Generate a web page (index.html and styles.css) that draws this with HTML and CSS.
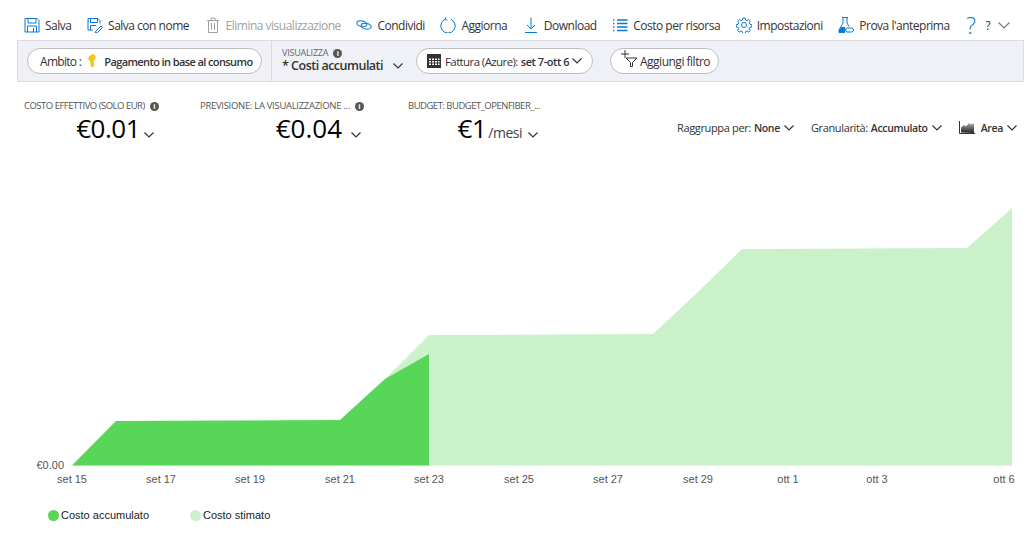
FILE: index.html
```html
<!doctype html>
<html>
  <head>
    <meta charset="utf-8">
    <title>Analisi dei costi</title>
    <link rel="stylesheet" href="styles.css">
  </head>
  <body>
    <header class="toolbar">
      <span class="cmd"><svg class="ico" viewBox="0 0 16 16"><path d="M1 1.500h12l2 2v11.500h-14zM4 1.500v4.500h8v-4.500M3.500 15v-6h9v6M9.500 11v4"/></svg>Salva</span>
      <span class="cmd"><svg class="ico" viewBox="0 0 16 16"><path d="M1 1.500h10l2 2v3M1 1.500v11.500h5M3.500 1.500v4h7v-4M3.500 13v-4.500h5.500M9 14l5-5 1.500 1.500-5 5-2.500.5zM1 4h1"/></svg>Salva con nome</span>
      <span class="cmd off"><svg class="ico trash" viewBox="0 0 16 16"><path d="M3.500 3.500v12h9v-12M2 3.500h12M6 3.500v-2.500h4v2.500M6.500 6v7M9.500 6v7"/></svg>Elimina visualizzazione</span>
      <span class="cmd"><svg class="ico" viewBox="0 0 16 16"><ellipse cx="5.800" cy="6.800" rx="5" ry="2.800" transform="rotate(12 5.800 6.800)"/><ellipse cx="10.200" cy="9.200" rx="5" ry="2.800" transform="rotate(12 10.200 9.200)"/></svg>Condividi</span>
      <span class="cmd"><svg class="ico" viewBox="0 0 16 16"><path d="M5.300 2.200a7.200 7.200 0 1 0 5.400 0M5.800 .2l-.6 2.100 2.100.9"/></svg>Aggiorna</span>
      <span class="cmd"><svg class="ico" viewBox="0 0 16 16"><path d="M8 .5v11.500M4 8l4 4 4-4M2 15.500h12"/></svg>Download</span>
      <span class="cmd"><svg class="ico" viewBox="0 0 16 16"><path d="M5 3h10.500M5 6.500h10.500M5 10h10.500M5 13.500h10.500" stroke-width="1.300"/><path d="M1 3h2M1 6.500h2M1 10h2M1 13.500h2" stroke-width="1.300" stroke-dasharray="1 .6"/></svg>Costo per risorsa</span>
      <span class="cmd"><svg class="ico" viewBox="0 0 16 16"><circle cx="8" cy="8" r="2.500"/><path d="M6.800 1h2.400l.4 2 1.300.6 1.800-1.100 1.600 1.600-1.100 1.800.6 1.300 2 .4v2.400l-2 .4-.6 1.300 1.100 1.800-1.600 1.600-1.800-1.100-1.300.6-.4 2h-2.400l-.4-2-1.300-.6-1.800 1.100-1.600-1.600 1.100-1.800-.6-1.300-2-.4v-2.400l2-.4.6-1.300-1.100-1.800 1.600-1.600 1.800 1.100 1.300-.6z"/></svg>Impostazioni</span>
      <span class="cmd"><svg class="ico flask" viewBox="0 0 16 16"><path d="M4 .5h6M5 .5v5.500l-4 7v2.500h6M9 .5v5.500l2 3.500"/><path class="fill" d="M3.500 10h3.500v5.500h-6v-2.500z"/><rect x="7.500" y="11" width="8" height="4" rx="2"/></svg>Prova l'anteprima</span>
      <span class="cmd help"><span class="qmark">?</span>?<svg class="chev wide" viewBox="0 0 12 7"><path d="M.5.500l5.500 5.500 5.500-5.500"/></svg></span>
    </header>

    <section class="filters">
      <div class="pill scope">Ambito :<svg class="key" viewBox="0 0 10 14"><path d="M5 0a3.500 3.500 0 0 1 1.500 6.700v1.300l1 1-1 1 1 1-2.500 2.500-1.500-1.500v-4.300a3.500 3.500 0 0 1 1.500-6.700z"/></svg><b>Pagamento in base al consumo</b></div>
      <div class="view">
        <div class="view-label">VISUALIZZA<i class="info">i</i></div>
        <div class="view-name">* Costi accumulati<svg class="chev" viewBox="0 0 10 6"><path d="M.5.500l4.500 4.500 4.500-4.500"/></svg></div>
      </div>
      <div class="pill range"><svg class="cal" viewBox="0 0 14 14"><path d="M0 0h14v14h-14z"/><path class="cells" d="M2 4.500h2v1.500h-2zM5 4.500h2v1.500h-2zM8 4.500h2v1.500h-2zM11 4.500h1.500v1.500h-1.500zM2 7h2v1.500h-2zM5 7h2v1.500h-2zM8 7h2v1.500h-2zM11 7h1.500v1.500h-1.500zM2 9.500h2v1.500h-2zM5 9.500h2v1.500h-2zM8 9.500h2v1.500h-2zM11 9.500h1.500v1.500h-1.500z"/></svg>Fattura (Azure):<b>set 7-ott 6</b><svg class="chev" viewBox="0 0 10 6"><path d="M.5.500l4.500 4.500 4.500-4.500"/></svg></div>
      <div class="pill add"><svg class="funnel" viewBox="0 0 18 17"><path d="M4 0v8M0 4h8"/><path d="M5 8h11l-4.500 4.500v4h-2v-4z"/></svg>Aggiungi filtro</div>
    </section>

    <section class="summary">
      <div class="kpi kpi-cost">
        <div class="kpi-label">COSTO EFFETTIVO (SOLO EUR)<i class="info">i</i></div>
        <div class="kpi-value">€0.01<svg class="chev" viewBox="0 0 10 6"><path d="M.5.500l4.500 4.500 4.500-4.500"/></svg></div>
      </div>
      <div class="kpi kpi-forecast">
        <div class="kpi-label">PREVISIONE: LA VISUALIZZAZIONE ...<i class="info">i</i></div>
        <div class="kpi-value">€0.04<svg class="chev" viewBox="0 0 10 6"><path d="M.5.500l4.500 4.500 4.500-4.500"/></svg></div>
      </div>
      <div class="kpi kpi-budget">
        <div class="kpi-label">BUDGET: BUDGET_OPENFIBER_...</div>
        <div class="kpi-value">€1<small>/mesi</small><svg class="chev" viewBox="0 0 10 6"><path d="M.5.500l4.500 4.500 4.500-4.500"/></svg></div>
      </div>
      <div class="controls">
        <span class="ctl">Raggruppa per:<b>None</b><svg class="chev" viewBox="0 0 10 6"><path d="M.5.500l4.500 4.500 4.500-4.500"/></svg></span>
        <span class="ctl">Granularità:<b>Accumulato</b><svg class="chev" viewBox="0 0 10 6"><path d="M.5.500l4.500 4.500 4.500-4.500"/></svg></span>
        <span class="ctl"><svg class="area-ico" viewBox="0 0 16 13"><defs><linearGradient id="areaFade" x1="0" y1="0" x2="0" y2="1"><stop offset="0" stop-color="#aaa"/><stop offset="1" stop-color="#222"/></linearGradient></defs><path class="axis" d="M.5 0v12.500h15.500"/><path fill="url(#areaFade)" d="M2 11.500v-5l3-2.500 2 1.500 3-3.500 2 1.500 3-1v9.500z"/></svg><b>Area</b><svg class="chev" viewBox="0 0 10 6"><path d="M.5.500l4.500 4.500 4.500-4.500"/></svg></span>
      </div>
    </section>

    <svg class="chart" viewBox="0 145 1034 345">
      <polygon class="est" points="72,465.500 116,421 340,420 385,379 429,335 653,334 698,292 742,249 967,248 1012,208 1012,465.500"/>
      <polygon class="act" points="72,465.500 116,421 340,420 385,379 429,354 429,465.500"/>
      <text class="ylab" x="64" y="469">€0.00</text>
      <text x="72" y="483">set 15</text>
      <text x="161" y="483">set 17</text>
      <text x="250" y="483">set 19</text>
      <text x="340" y="483">set 21</text>
      <text x="429" y="483">set 23</text>
      <text x="519" y="483">set 25</text>
      <text x="608" y="483">set 27</text>
      <text x="698" y="483">set 29</text>
      <text x="788" y="483">ott 1</text>
      <text x="877" y="483">ott 3</text>
      <text x="1004" y="483">ott 6</text>
    </svg>

    <footer class="legend">
      <span class="key-item"><i class="dot dot-act"></i>Costo accumulato</span>
      <span class="key-item"><i class="dot dot-est"></i>Costo stimato</span>
    </footer>
  </body>
</html>
```

FILE: styles.css
```css
html, body {
  margin: 0;
  padding: 0;
}

body {
  width: 1034px;
  height: 536px;
  overflow: hidden;
  background: #fff;
  color: #333;
  font-family: "Open Sans", "Noto Sans", sans-serif;
  font-size: 12px;
  letter-spacing: -0.5px;
}

b {
  font-size: 11px;
  font-weight: 600;
}

svg {
  flex: none;
}

.chev {
  width: 10px;
  height: 6px;
  fill: none;
  stroke: #333;
  stroke-width: 1.2;
}

.chev.wide {
  width: 12px;
  height: 7px;
  margin-left: -2px;
  stroke: #777;
}

.info {
  display: inline-block;
  width: 9px;
  height: 9px;
  margin-left: 5px;
  border-radius: 50%;
  background: #555;
  color: #fff;
  font: bold 8px/9px "Liberation Sans", sans-serif;
  letter-spacing: 0;
  text-align: center;
}

/* top command bar */
.toolbar {
  display: flex;
  align-items: center;
  height: 26px;
  padding: 12px 0 2px 24px;
}

.cmd {
  display: flex;
  align-items: center;
  gap: 5px;
  margin-right: 15.600px;
  white-space: nowrap;
}

.cmd.off {
  color: #a0a0a0;
}

.ico {
  width: 16px;
  height: 16px;
  fill: none;
  stroke: #0a78d4;
  stroke-width: 1;
}

.off .ico {
  stroke: #a0a0a0;
}

.flask .fill {
  fill: #0a78d4;
  stroke: none;
}

.help {
  gap: 10px;
  margin: 0 0 0 1px;
}

.qmark {
  color: #0a78d4;
  font-size: 23px;
  font-weight: 300;
  line-height: 16px;
}

/* filter strip */
.filters {
  display: flex;
  align-items: center;
  box-sizing: border-box;
  width: 1007px;
  height: 42px;
  margin-left: 17px;
  padding-left: 9px;
  border: 1px solid #dcdde2;
  background: #f0f1f6;
}

.pill {
  display: flex;
  align-items: center;
  box-sizing: border-box;
  height: 26px;
  padding: 0 9px 0 12px;
  border: 1px solid #bdbdbd;
  border-radius: 13px;
  background: #fff;
  white-space: nowrap;
}

.scope {
  width: 235px;
  letter-spacing: -0.7px;
}

.scope b {
  letter-spacing: -0.6px;
}

.key {
  width: 10px;
  height: 14px;
  margin: 0 7px 0 6px;
  fill: #f5c518;
}

.view {
  align-self: stretch;
  box-sizing: border-box;
  width: 145px;
  margin-left: 9px;
  padding: 6px 0 0 10px;
  border-left: 1px solid #d8d9de;
}

.view-label {
  color: #666;
  font-size: 9px;
  letter-spacing: -0.2px;
  line-height: 11px;
}

.view-name {
  display: flex;
  align-items: center;
  gap: 10px;
  font-size: 12.500px;
  font-weight: 600;
  line-height: 16px;
}

.range {
  width: 177px;
  padding-left: 10px;
  font-size: 11.500px;
  letter-spacing: -0.6px;
}

.cal {
  width: 14px;
  height: 14px;
  margin-right: 4px;
  fill: #333;
}

.cal .cells {
  fill: #fff;
}

.range b {
  margin: 0 3px 0 3px;
  letter-spacing: -0.45px;
}

.add {
  width: 109px;
  margin-left: 17px;
  padding-left: 10px;
}

.funnel {
  width: 18px;
  height: 17px;
  margin: -6px 1px 0 0;
  fill: none;
  stroke: #333;
  stroke-width: 1;
}

/* totals and chart controls */
.summary {
  display: flex;
  align-items: flex-start;
  height: 63px;
}

.kpi {
  padding-top: 17px;
}

.kpi-label {
  margin-bottom: 1px;
  color: #555;
  font-size: 9.500px;
  line-height: 13px;
  white-space: nowrap;
}

.kpi-forecast .kpi-label {
  letter-spacing: -0.3px;
}

.kpi-value {
  display: flex;
  align-items: baseline;
  justify-content: flex-end;
  gap: 4px;
  color: #000;
  font-size: 26px;
  line-height: 30px;
}

.kpi-value small {
  margin-left: -3px;
  color: #444;
  font-size: 14px;
}

.kpi-cost {
  width: 176px;
  margin-left: 24px;
}

.kpi-cost .kpi-value {
  padding-right: 46px;
}

.kpi-forecast {
  width: 208px;
}

.kpi-forecast .kpi-value {
  gap: 9px;
  padding-right: 47px;
  letter-spacing: 0;
}

.kpi-budget {
  width: 132px;
}

.kpi-budget .kpi-value {
  gap: 5px;
  padding-right: 1px;
}

.kpi-budget .chev {
  width: 12px;
}

.controls {
  display: flex;
  align-items: center;
  gap: 17px;
  margin: 38px 0 0 137px;
}

.ctl {
  display: flex;
  align-items: center;
  font-size: 11px;
  letter-spacing: -0.35px;
  white-space: nowrap;
}

.ctl b {
  margin: 0 4px 0 3px;
  font-size: 10.500px;
  letter-spacing: -0.35px;
}

.area-ico {
  width: 16px;
  height: 13px;
  margin-right: 3px;
}

.area-ico .axis {
  fill: none;
  stroke: #333;
}

/* chart */
.chart {
  display: block;
  width: 1034px;
  height: 345px;
}

.chart text {
  fill: #555;
  font-family: "Liberation Sans", Arial, sans-serif;
  font-size: 11px;
  letter-spacing: 0;
  text-anchor: middle;
}

.chart .ylab {
  text-anchor: end;
}

.est {
  fill: #cbf1cb;
}

.act {
  fill: #57d658;
}

.legend {
  display: flex;
  margin-top: 19px;
  padding-left: 48px;
  color: #222;
  font-family: "Liberation Sans", Arial, sans-serif;
  font-size: 11px;
  letter-spacing: 0;
}

.key-item {
  display: flex;
  align-items: center;
  gap: 2px;
  width: 142px;
}

.dot {
  width: 11px;
  height: 11px;
  border-radius: 50%;
}

.dot-act {
  background: #57d658;
}

.dot-est {
  background: #cbf1cb;
}
```
